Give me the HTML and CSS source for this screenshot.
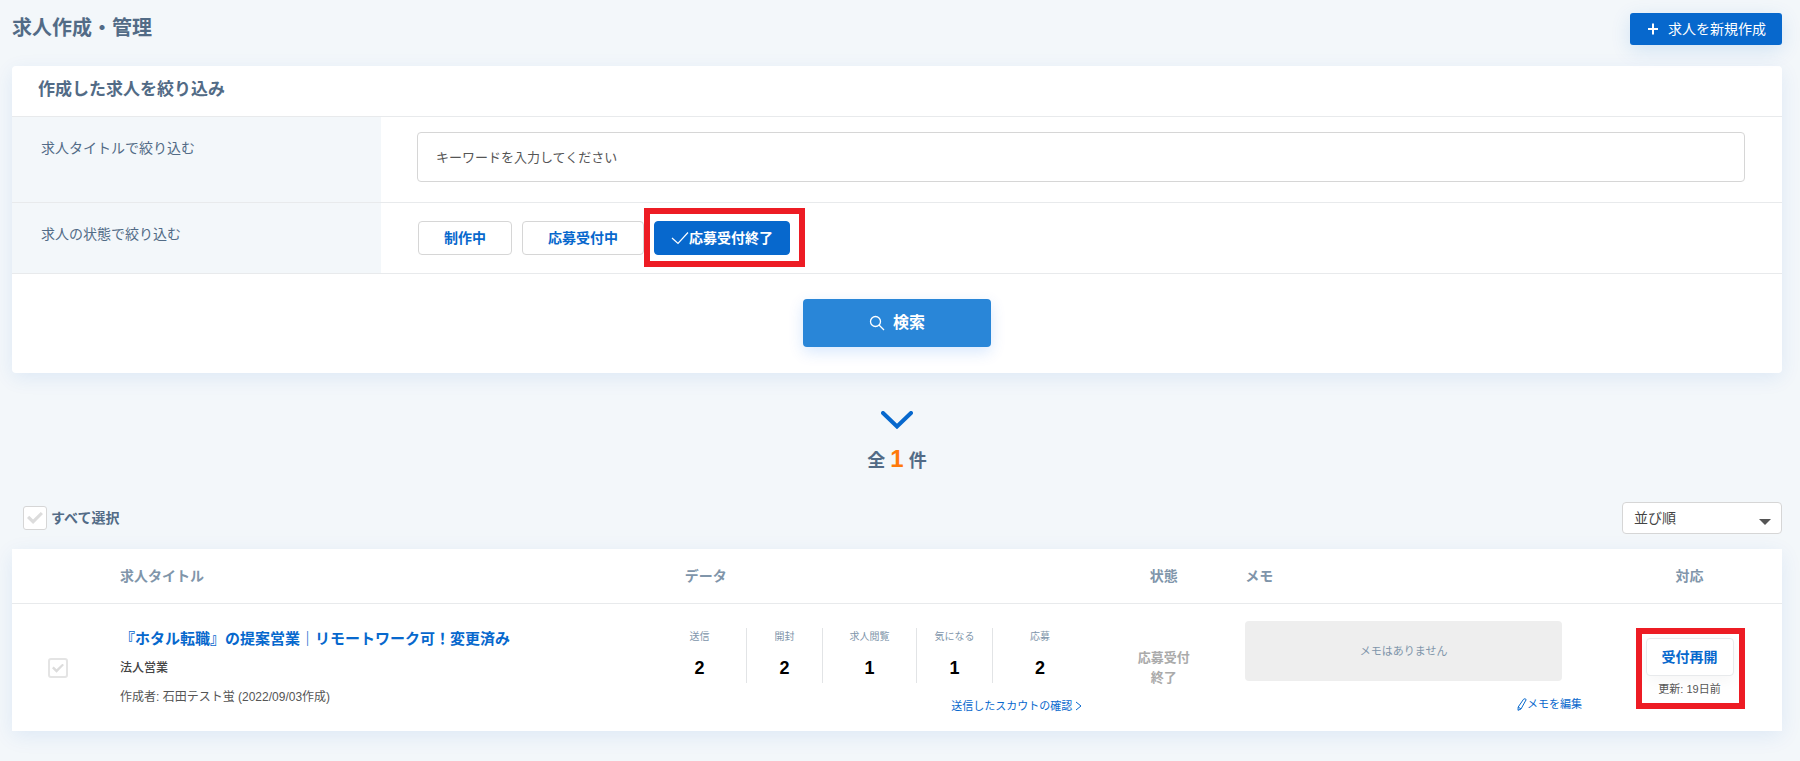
FILE: index.html
```html
<!DOCTYPE html>
<html lang="ja">
<head>
<meta charset="utf-8">
<meta name="viewport" content="width=device-width, initial-scale=1">
<title>求人作成・管理</title>
<link rel="stylesheet" href="styles.css">
</head>
<body>
<main class="page">
  <header class="page-header">
    <h1 class="page-title">求人作成・管理</h1>
    <button type="button" class="create-button">
      <svg class="create-icon" viewBox="0 0 10 12" aria-hidden="true"><path d="M5 0.500v11M0 6h10" fill="none" stroke="currentColor" stroke-width="2"/></svg>
      求人を新規作成
    </button>
  </header>

  <form class="card filter">
    <h2 class="filter-title">作成した求人を絞り込み</h2>
    <div class="filter-row">
      <label class="filter-label" for="keyword">求人タイトルで絞り込む</label>
      <div class="filter-field filter-field-text">
        <input class="keyword" id="keyword" type="text" placeholder="キーワードを入力してください">
      </div>
    </div>
    <div class="filter-row">
      <span class="filter-label" id="state-label">求人の状態で絞り込む</span>
      <div class="filter-field filter-field-states" role="group" aria-labelledby="state-label">
        <button type="button" class="state-button" aria-pressed="false">制作中</button>
        <button type="button" class="state-button" aria-pressed="false">応募受付中</button>
        <span class="marked marked-state">
          <button type="button" class="state-button state-button-on" aria-pressed="true"><svg class="check-icon" viewBox="0 0 18 14" aria-hidden="true"><path d="M1 7l6 5.500L17 1.500" fill="none" stroke="currentColor" stroke-width="1.200"/></svg>応募受付終了</button>
        </span>
      </div>
    </div>
    <div class="filter-actions">
      <button type="submit" class="search-button">
        <svg class="search-icon" viewBox="0 0 16 16" aria-hidden="true"><g fill="none" stroke="currentColor" stroke-width="1.300"><circle cx="6.500" cy="6.500" r="5"/><path d="M10 10l5 5"/></g></svg>
        検索
      </button>
    </div>
  </form>

  <svg class="chevron" viewBox="0 0 32 18" aria-hidden="true"><path d="M2 2l14 13.500L30 2" fill="none" stroke="currentColor" stroke-width="4" stroke-linecap="round"/></svg>
  <p class="count">全 <span class="count-number">1</span> 件</p>

  <div class="toolbar">
    <label class="select-all"><input type="checkbox" class="tick tick-large">すべて選択</label>
    <span class="sort">
      <select class="sort-select" aria-label="並び順"><option>並び順</option></select>
    </span>
  </div>

  <table class="card jobs">
    <colgroup>
      <col class="col-check"><col class="col-title"><col class="col-data"><col class="col-status"><col class="col-memo"><col class="col-action">
    </colgroup>
    <thead>
      <tr>
        <th></th>
        <th class="cell-title">求人タイトル</th>
        <th class="head-data">データ</th>
        <th class="cell-center">状態</th>
        <th class="cell-memo">メモ</th>
        <th class="cell-center">対応</th>
      </tr>
    </thead>
    <tbody>
      <tr>
        <td class="cell-center"><input type="checkbox" class="tick" aria-label="求人を選択"></td>
        <td class="cell-title">
          <div class="job">
            <a class="job-title" href="#">『ホタル転職』の提案営業｜リモートワーク可！変更済み</a>
            <span class="job-type">法人営業</span>
            <span class="job-author">作成者: 石田テスト蛍 (2022/09/03作成)</span>
          </div>
        </td>
        <td class="cell-data">
          <dl class="stats">
            <div class="stat"><dt>送信</dt><dd>2</dd></div>
            <div class="stat"><dt>開封</dt><dd>2</dd></div>
            <div class="stat"><dt>求人閲覧</dt><dd>1</dd></div>
            <div class="stat"><dt>気になる</dt><dd>1</dd></div>
            <div class="stat"><dt>応募</dt><dd>2</dd></div>
          </dl>
          <a class="small-link scout-link" href="#">送信したスカウトの確認<svg class="arrow-icon" viewBox="0 0 9 10" aria-hidden="true"><path d="M2 1l5 4-5 4" fill="none" stroke="currentColor"/></svg></a>
        </td>
        <td class="cell-center status">応募受付<br>終了</td>
        <td class="cell-memo cell-top">
          <p class="memo">メモはありません</p>
          <a class="small-link" href="#"><svg class="pencil-icon" viewBox="0 0 10 13" aria-hidden="true"><path d="M6.500 1.300Q8 0 9.200 1.600L4 11 1 12.300 1.200 9zM1.200 9L4 11" fill="none" stroke="currentColor" stroke-linejoin="round"/></svg>メモを編集</a>
        </td>
        <td class="cell-center">
          <div class="marked marked-action">
            <button type="button" class="reopen-button">受付再開</button>
            <span class="updated">更新: 19日前</span>
          </div>
        </td>
      </tr>
    </tbody>
  </table>
</main>
</body>
</html>
```
FILE: styles.css
```css
:root {
  --blue: #0768cd;
  --slate: #526b86;
  --muted: #8095aa;
  --line: #e8eaec;
  --field-line: #d6d6d6;
}

* {
  box-sizing: border-box;
}

body {
  margin: 0;
  background: #f3f7fa;
  color: #555;
  font-family: "Liberation Sans", "Noto Sans CJK JP", sans-serif;
  font-size: 14px;
  line-height: 20px;
}

button,
input,
select {
  font: inherit;
}

button {
  cursor: pointer;
}

a {
  color: var(--blue);
  text-decoration: none;
}

.page {
  padding: 13px 18px 30px 12px;
}

.page-header {
  display: flex;
  justify-content: space-between;
  align-items: flex-start;
  margin-bottom: 21px;
}

.page-title {
  margin: 0;
  color: var(--slate);
  font-size: 20px;
  line-height: 30px;
}

.create-button {
  display: flex;
  align-items: center;
  gap: 10px;
  height: 32px;
  padding: 0 16px 0 18px;
  border: 0;
  border-radius: 3px;
  background: var(--blue);
  color: #fff;
  box-shadow: 0 5px 20px rgba(7, 104, 205, 0.14);
}

.create-icon {
  width: 10px;
  height: 12px;
}

.card {
  background: #fff;
  box-shadow: 0 5px 20px rgba(7, 90, 205, 0.09);
}

.filter {
  border-radius: 4px;
}

.filter-title {
  margin: 0;
  padding: 14px 26px 16px;
  border-bottom: 1px solid var(--line);
  color: var(--slate);
  font-size: 17px;
}

.filter-row {
  display: flex;
  border-bottom: 1px solid var(--line);
}

.filter-label {
  flex: 0 0 369px;
  padding: 21px 29px;
  background: #f3f7fa;
  color: var(--slate);
}

.filter-field {
  flex: 1;
  padding: 15px 37px 20px 36px;
}

.filter-field-states {
  display: flex;
  gap: 10px;
  padding: 18px 37px;
}

.keyword {
  display: block;
  width: 100%;
  height: 50px;
  padding: 0 18px;
  border: 1px solid var(--field-line);
  border-radius: 4px;
  background: #fff;
  color: #555;
  font-size: 13px;
}

.keyword::placeholder {
  color: #555;
  opacity: 1;
}

.state-button {
  height: 34px;
  padding: 0 25px;
  border: 1px solid var(--field-line);
  border-radius: 4px;
  background: #fff;
  color: var(--blue);
  font-weight: bold;
}

.state-button-on {
  display: flex;
  align-items: center;
  padding: 0 16px;
  border-color: var(--blue);
  background: var(--blue);
  color: #fff;
}

.check-icon {
  width: 18px;
  height: 14px;
}

.marked {
  position: relative;
}

.marked::after {
  content: "";
  position: absolute;
  inset: -10px -11px -12px -10px;
  border: 6px solid #ed1c24;
  pointer-events: none;
}

.marked-state::after {
  inset: -13px -15px -12px -10px;
}

.filter-actions {
  display: flex;
  justify-content: center;
  padding: 25px 0 26px;
}

.search-button {
  display: flex;
  align-items: center;
  justify-content: center;
  gap: 8px;
  width: 188px;
  height: 48px;
  border: 0;
  border-radius: 4px;
  background: #2986d8;
  color: #fff;
  font-size: 16px;
  font-weight: bold;
  box-shadow: 0 5px 15px rgba(7, 104, 240, 0.16);
}

.search-icon {
  width: 16px;
  height: 16px;
}

.chevron {
  display: block;
  width: 32px;
  height: 18px;
  margin: 38px auto 17px;
  color: var(--blue);
}

.count {
  margin: 0 0 26px;
  color: var(--slate);
  font-size: 18px;
  font-weight: bold;
  line-height: 30px;
  text-align: center;
}

.count-number {
  color: #ff7a0a;
  font-size: 24px;
  line-height: 20px;
}

.toolbar {
  display: flex;
  justify-content: space-between;
  align-items: center;
  margin-bottom: 15px;
}

.select-all {
  display: flex;
  align-items: center;
  gap: 4px;
  padding-left: 11px;
  color: var(--slate);
  font-weight: bold;
}

.tick {
  display: inline-grid;
  place-content: center;
  width: 20px;
  height: 20px;
  margin: 0;
  border: 2px solid #e4e4e4;
  border-radius: 3px;
  background: #fff;
  appearance: none;
  vertical-align: middle;
}

.tick::before {
  content: "";
  width: 12px;
  height: 9px;
  background: #dcdcdc;
  clip-path: polygon(0 50%, 14% 32%, 38% 62%, 86% 0, 100% 16%, 38% 100%);
}

.tick-large {
  width: 24px;
  height: 24px;
  border-width: 1px;
  border-color: #d6d6d6;
}

.tick-large::before {
  width: 16px;
  height: 12px;
}

.sort {
  position: relative;
}

.sort::after {
  content: "";
  position: absolute;
  top: 17px;
  right: 11px;
  border: 6px solid transparent;
  border-top-color: #555;
  border-bottom: 0;
  pointer-events: none;
}

.sort-select {
  display: block;
  width: 160px;
  height: 32px;
  padding: 0 11px;
  border: 1px solid var(--field-line);
  border-radius: 4px;
  background: #fff;
  color: #444;
  appearance: none;
}

.jobs {
  width: 100%;
  border-spacing: 0;
  table-layout: fixed;
}

.col-check {
  width: 92px;
}

.col-title {
  width: 31%;
}

.col-data {
  width: 25%;
}

.col-status {
  width: 137px;
}

.col-action {
  width: 185px;
}

.jobs th {
  height: 55px;
  padding: 0;
  border-bottom: 1px solid var(--line);
  color: var(--muted);
  text-align: left;
}

.jobs td {
  padding: 0;
}

.jobs .head-data {
  padding-left: 32px;
}

.jobs .cell-title {
  padding-left: 16px;
}

.jobs .cell-center {
  text-align: center;
}

.jobs .cell-memo {
  padding-left: 13px;
}

.jobs .cell-data {
  padding: 24px 8px 17px 0;
  vertical-align: top;
}

.jobs .cell-top {
  padding: 17px 15px 17px 13px;
  vertical-align: top;
}

.job {
  display: flex;
  flex-direction: column;
  align-items: flex-start;
  gap: 5px;
  font-size: 12px;
  line-height: 24px;
}

.job-title {
  font-size: 15px;
  font-weight: bold;
}

.job-type {
  color: #444;
  font-weight: 500;
}

.stats {
  display: grid;
  grid-template-columns: 5fr 4fr 5fr 4fr 5fr;
  margin: 0 0 15px;
  text-align: center;
}

.stat {
  height: 55px;
  border-right: 1px solid #e2e4e6;
}

.stat:last-child {
  border-right: 0;
}

.stat dt {
  margin-bottom: 10px;
  color: var(--muted);
  font-size: 10px;
  line-height: 18px;
}

.stat dd {
  margin: 0;
  color: #000;
  font-size: 18px;
  font-weight: bold;
  line-height: 24px;
}

.small-link {
  display: flex;
  justify-content: flex-end;
  align-items: center;
  font-size: 11px;
  line-height: 16px;
}

.scout-link {
  gap: 2px;
  padding-right: 4px;
}

.arrow-icon {
  width: 9px;
  height: 10px;
}

.pencil-icon {
  width: 10px;
  height: 13px;
}

.status {
  color: #aaa;
  font-size: 13px;
  font-weight: bold;
}

.memo {
  margin: 0 20px 15px 0;
  border-radius: 4px;
  background: #eee;
  color: var(--muted);
  font-size: 11px;
  line-height: 60px;
  text-align: center;
}

.marked-action {
  display: flex;
  flex-direction: column;
  align-items: center;
  gap: 5px;
  width: fit-content;
  margin: 0 auto;
}

.reopen-button {
  height: 38px;
  padding: 0 15px;
  border: 1px solid var(--line);
  border-radius: 4px;
  background: #fff;
  color: var(--blue);
  font-weight: bold;
  box-shadow: 0 5px 15px rgba(0, 0, 0, 0.04);
}

.updated {
  font-size: 11px;
  line-height: 16px;
}
```
